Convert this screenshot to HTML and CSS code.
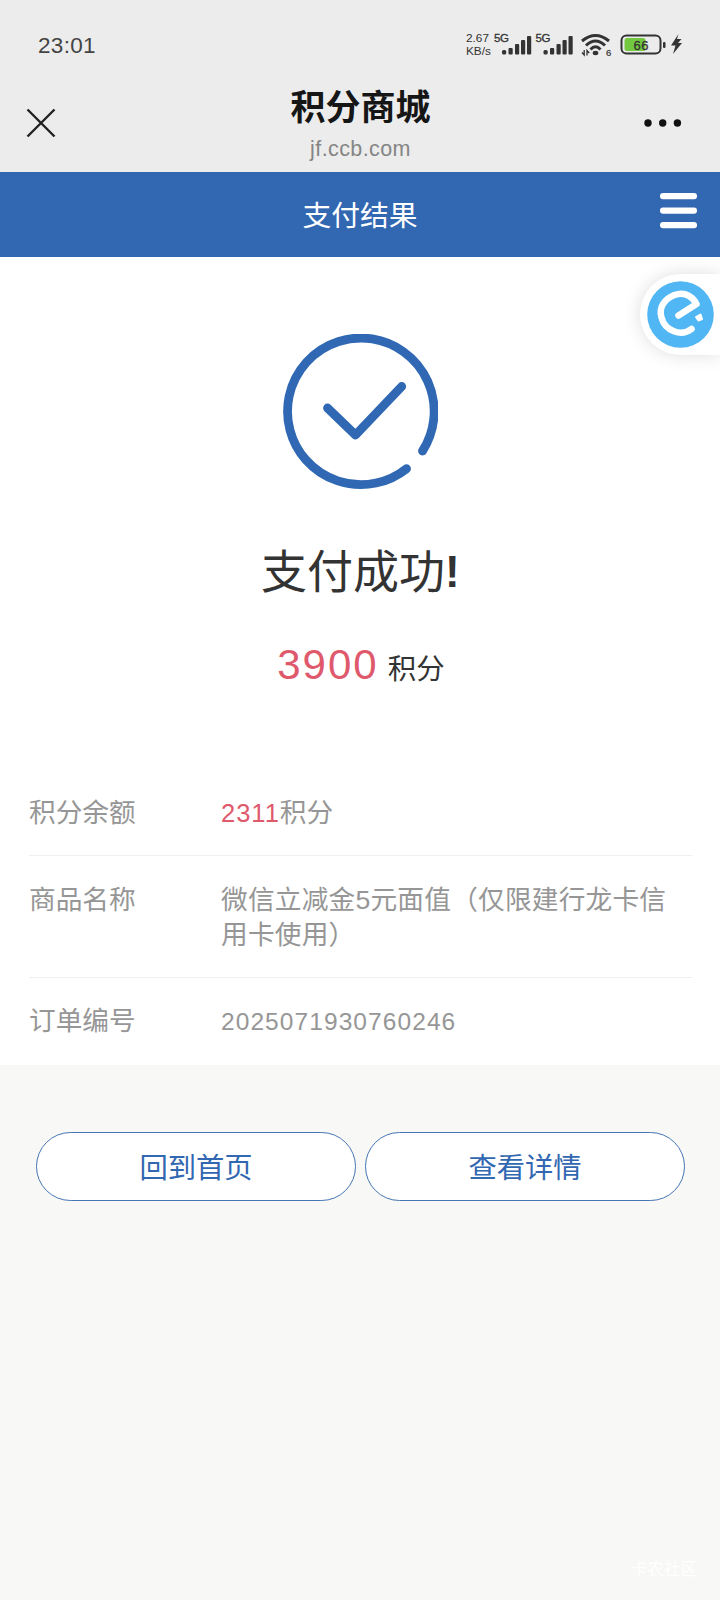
FILE: index.html
```html
<!DOCTYPE html>
<html lang="zh-CN">
<head>
<meta charset="utf-8">
<title>积分商城</title>
<link rel="stylesheet" href="styles.css">
</head>
<body>
<header class="browser-head">
  <div class="status">
    <span class="clock">23:01</span>
    <div class="indicators">
      <div class="rate"><span>2.67</span><span>KB/s</span></div>
      <svg class="signals" width="200" height="30" viewBox="0 0 200 30" fill="#333">
        <g class="tag"><text x="1" y="12" textLength="15">5G</text><text x="42.500" y="12" textLength="15">5G</text></g>
        <g id="bars"><rect x="9" y="20" width="4.200" height="4.500" rx="1.500"/><rect x="15.500" y="18" width="4.200" height="6.500" rx="1"/><rect x="22" y="14" width="4.200" height="10.500" rx="1"/><rect x="28" y="10" width="4.200" height="14.500" rx="1"/><rect x="34" y="6" width="4.200" height="18.500" rx="1"/></g>
        <use href="#bars" x="41.500"/>
        <g fill="none" stroke="#333" stroke-width="3"><path d="M89 11Q102.500 0 116 11M93 15.500Q102.500 6.500 112 15.500M97.500 19.500Q102.500 14 107.500 19.500"/></g>
        <ellipse cx="102.500" cy="23" rx="2.800" ry="2.200"/>
        <path d="M91.200 20v5L89 22.500M94 25.500v-5L96.200 23" fill="none" stroke="#333" stroke-width="1.300"/>
        <text class="tiny" x="113" y="26">6</text>
        <rect x="128.500" y="5.500" width="39" height="18" rx="5" fill="none" stroke="#333" stroke-width="2"/>
        <rect x="131.500" y="8" width="21" height="13" rx="2.500" fill="#72c83e"/>
        <text class="charge" x="140.500" y="19.500" textLength="15">66</text>
        <rect x="170" y="12" width="2.500" height="6" rx="1"/>
        <path d="M185.500 4L178 15.500H182.500L180 24L189 13H185L188.500 9H184Z"/>
      </svg>
    </div>
  </div>
  <div class="page-head">
    <svg class="close" width="30" height="30" viewBox="0 0 30 30"><path d="M1.500 1.500L28.500 28.500M28.500 1.500L1.500 28.500" stroke="#222" stroke-width="2.400"/></svg>
    <div class="page-name"><h1>积分商城</h1><span class="domain">jf.ccb.com</span></div>
    <svg class="more" width="38" height="8" viewBox="0 0 38 8" fill="#111"><circle cx="4" cy="4" r="3.700"/><circle cx="18.700" cy="4" r="3.700"/><circle cx="33.400" cy="4" r="3.700"/></svg>
  </div>
</header>
<nav class="title-bar">
  <span class="title">支付结果</span>
  <svg class="menu" width="37" height="36" viewBox="0 0 37 36" fill="#fff"><rect y="0" width="37" height="6.200" rx="3"/><rect y="14.500" width="37" height="6.200" rx="3"/><rect y="29" width="37" height="6.200" rx="3"/></svg>
</nav>
<a class="assistant">
  <svg width="67" height="67" viewBox="0 0 67 67"><circle cx="33.500" cy="33.500" r="33.300" fill="#51b6f4"/><path d="M31.500 34.500L49.500 23C44 13 35 11 27.500 14C17 18 11.500 27 14.500 36.500C18 50 34 56 44.500 48" fill="none" stroke="#fff" stroke-width="6.500" stroke-linecap="round" stroke-linejoin="round"/><path d="M49 36L53.500 33.500L55 38L51.500 39.500Z" fill="#fff" stroke="#fff" stroke-width="2" stroke-linejoin="round"/></svg>
</a>
<main>
  <section class="result">
    <svg class="success" width="156" height="156" viewBox="0 0 156 156" fill="none" stroke="#3068b4" stroke-width="8.800" stroke-linecap="round"><path d="M124.500 134.700A73.300 73.300 0 1 1 140.500 117"/><path d="M45.500 74L73.500 101L119.700 52.500" stroke-linejoin="round"/></svg>
    <p class="message">支付成功<span>!</span></p>
    <p class="points"><b>3900</b><span>积分</span></p>
  </section>
  <dl class="details">
    <div class="row"><dt>积分余额</dt><dd><b>2311</b>积分</dd></div>
    <div class="row"><dt>商品名称</dt><dd class="goods">微信立减金5元面值（仅限建行龙卡信用卡使用）</dd></div>
    <div class="row"><dt>订单编号</dt><dd class="number">2025071930760246</dd></div>
  </dl>
</main>
<footer>
  <div class="actions"><button>回到首页</button><button>查看详情</button></div>
  <span class="community">卡农社区</span>
</footer>
</body>
</html>
```
FILE: styles.css
```css
* { box-sizing: border-box; }
body { margin: 0; width: 720px; height: 1600px; display: flex; flex-direction: column; position: relative; overflow: hidden; background: #f8f8f6; color: #333; font-family: "Liberation Sans", "Noto Sans CJK SC", sans-serif; }
h1, p, dl, dd { margin: 0; }
svg { display: block; }
.browser-head { height: 172px; background: #ececec; flex: none; }
.status { height: 78px; padding: 30px 27px 0 38px; display: flex; justify-content: space-between; }
.clock { font-size: 22.500px; line-height: 31px; letter-spacing: .3px; color: #444; }
.indicators { display: flex; width: 227px; }
.rate { display: flex; flex-direction: column; width: 27px; font-size: 11.800px; line-height: 13px; padding-top: 2px; flex: none; }
.signals { flex: none; }
.tag { font-size: 11.500px; stroke: #333; stroke-width: .3; }
.tiny { font-size: 9.500px; stroke: #333; stroke-width: .2; }
.charge { font-size: 13px; stroke: #333; stroke-width: .3; }
.page-head { height: 94px; padding: 0 38px 0 26px; display: grid; grid-template-columns: 80px 1fr 67px; }
.close { margin-top: 30px; }
.page-name { display: flex; flex-direction: column; align-items: center; }
h1 { font: 700 35px/48px "Noto Sans CJK SC", sans-serif; color: #161616; margin-top: 3px; }
.domain { color: #858585; font-size: 21.500px; line-height: 25px; margin-top: 8px; letter-spacing: .4px; }
.more { margin-top: 41px; justify-self: end; }
.title-bar { height: 85px; flex: none; background: #3267b1; color: #fff; display: grid; grid-template-columns: 37px 1fr 37px; padding: 0 23px; }
.title { grid-column: 2; justify-self: center; font-size: 28.800px; line-height: 88px; }
.menu { margin-top: 21px; }
.assistant { position: absolute; right: 0; top: 274px; width: 80px; height: 81px; padding: 7px; border-radius: 41px 0 0 41px; background: #fff; box-shadow: 0 0 18px #0002; clip-path: inset(-17px 0 -30px -30px); }
main { height: 808px; background: #fff; flex: none; }
.result { height: 515px; padding-top: 77px; display: flex; flex-direction: column; align-items: center; }
.message { font-size: 46px; line-height: 60px; margin-top: 52px; display: flex; }
.message span { font-size: 44px; font-weight: 700; width: 14px; }
.points { display: flex; align-items: baseline; gap: 9px; margin: 33px 0 0 2px; line-height: 60px; font-size: 28.500px; }
.points b { font-size: 42px; font-weight: 400; letter-spacing: 2px; color: #df596d; }
.details { padding: 0 28px 0 29px; color: #969696; font-size: 26.700px; line-height: 35px; }
.row { display: flex; padding: 26px 0 25px; border-bottom: 1px solid #efefef; }
.row:first-child { padding: 24px 0; }
.row:nth-child(2) { padding-top: 27px; padding-bottom: 24px; }
.row:last-child { border: 0; padding-bottom: 0; }
dt { width: 192px; flex: none; }
dd { width: 458px; }
dd b { color: #df596d; font-size: 25.500px; font-weight: 400; letter-spacing: 1px; }
.goods { letter-spacing: .2px; }
.number { font-size: 24.500px; letter-spacing: 1.080px; }
footer { flex: 1; display: flex; flex-direction: column; justify-content: space-between; padding: 67px 23px 17px 36px; }
.actions { display: flex; gap: 9px; }
button { width: 320px; height: 69px; border: 1px solid #4475b4; border-radius: 35px; background: #fff; color: #3267b1; font: 28.300px/60px "Liberation Sans", "Noto Sans CJK SC", sans-serif; padding: 3px 0 0; }
.community { align-self: flex-end; color: #fff; font-size: 16.500px; line-height: 28px; }
```
